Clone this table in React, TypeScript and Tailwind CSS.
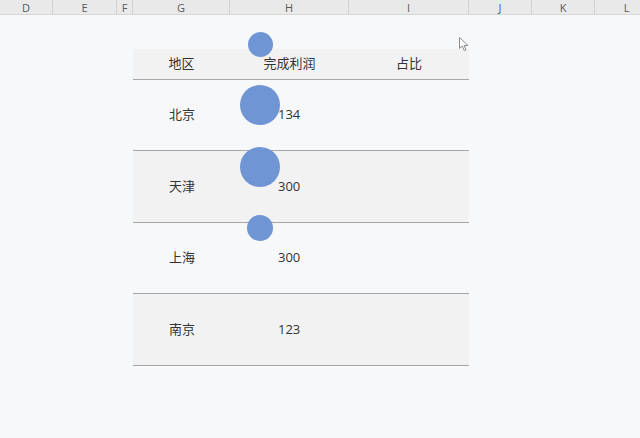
import React from "react";

const cols = [
  { label: "D", w: 53 },
  { label: "E", w: 64 },
  { label: "F", w: 16 },
  { label: "G", w: 97 },
  { label: "H", w: 119 },
  { label: "I", w: 120 },
  { label: "J", w: 63 },
  { label: "K", w: 63 },
  { label: "L", w: 64 },
];

const rows = [
  { city: "北京", value: "134", shade: false, h: "h-[71px]" },
  { city: "天津", value: "300", shade: true, h: "h-[72px]" },
  { city: "上海", value: "300", shade: false, h: "h-[71px]" },
  { city: "南京", value: "123", shade: true, h: "h-[72px]" },
];

// bubbles of the animation frame, drawn over the table
const bubbles = [
  { x: 260, y: 44, d: 25 },
  { x: 260, y: 105, d: 40 },
  { x: 260, y: 167, d: 40 },
  { x: 260, y: 228, d: 26 },
];

export default function App() {
  return (
    <div
      className="relative w-[640px] h-[438px] overflow-hidden bg-[#f7f8fa] text-[#333]"
      style={{ fontFamily: '"Open Sans", "Noto Sans CJK SC", sans-serif' }}
    >
      {/* Column header strip */}
      <div className="flex h-[15px] bg-[#e9e9e9] border-b border-[#d6d6d6]">
        {cols.map((c) => (
          <div
            key={c.label}
            style={{ width: c.w }}
            className="shrink-0 flex items-center justify-center border-r border-[#d2d2d2] text-[11px] leading-none text-[#5a5a5a]"
          >
            {c.label}
          </div>
        ))}
      </div>

      {/* Table */}
      <div className="pt-[34px] pl-[133px]">
        <div className="w-[336px] text-[13px]">
          <div className="grid grid-cols-[97px_119px_120px] h-[31px] bg-[#f2f2f2] border-b border-[#a6a6a6] items-center text-center">
            <div>地区</div>
            <div>完成利润</div>
            <div>占比</div>
          </div>
          {rows.map((r) => (
            <div
              key={r.city}
              className={`grid grid-cols-[97px_119px_120px] items-center border-b border-[#a6a6a6] ${r.h} ${
                r.shade ? "bg-[#f2f2f2]" : ""
              }`}
            >
              <div className="pl-[36px]">{r.city}</div>
              <div className="pl-[48px]">{r.value}</div>
              <div />
            </div>
          ))}
        </div>
      </div>

      {bubbles.map((b, i) => (
        <div
          key={i}
          className="absolute rounded-full bg-[#7095d5]"
          style={{ left: b.x - b.d / 2, top: b.y - b.d / 2, width: b.d, height: b.d }}
        />
      ))}

      {/* Mouse pointer */}
      <svg className="absolute left-[459px] top-[37px]" width="11" height="15" viewBox="0 0 11 15">
        <path
          d="M0.5 0.5 L0.5 11.5 L3.3 9 L5.3 13.6 L7 12.9 L5.1 8.5 L9 8.5 Z"
          fill="#fff"
          stroke="#8a8a8a"
          strokeWidth="1"
          strokeLinejoin="round"
        />
      </svg>
    </div>
  );
}
